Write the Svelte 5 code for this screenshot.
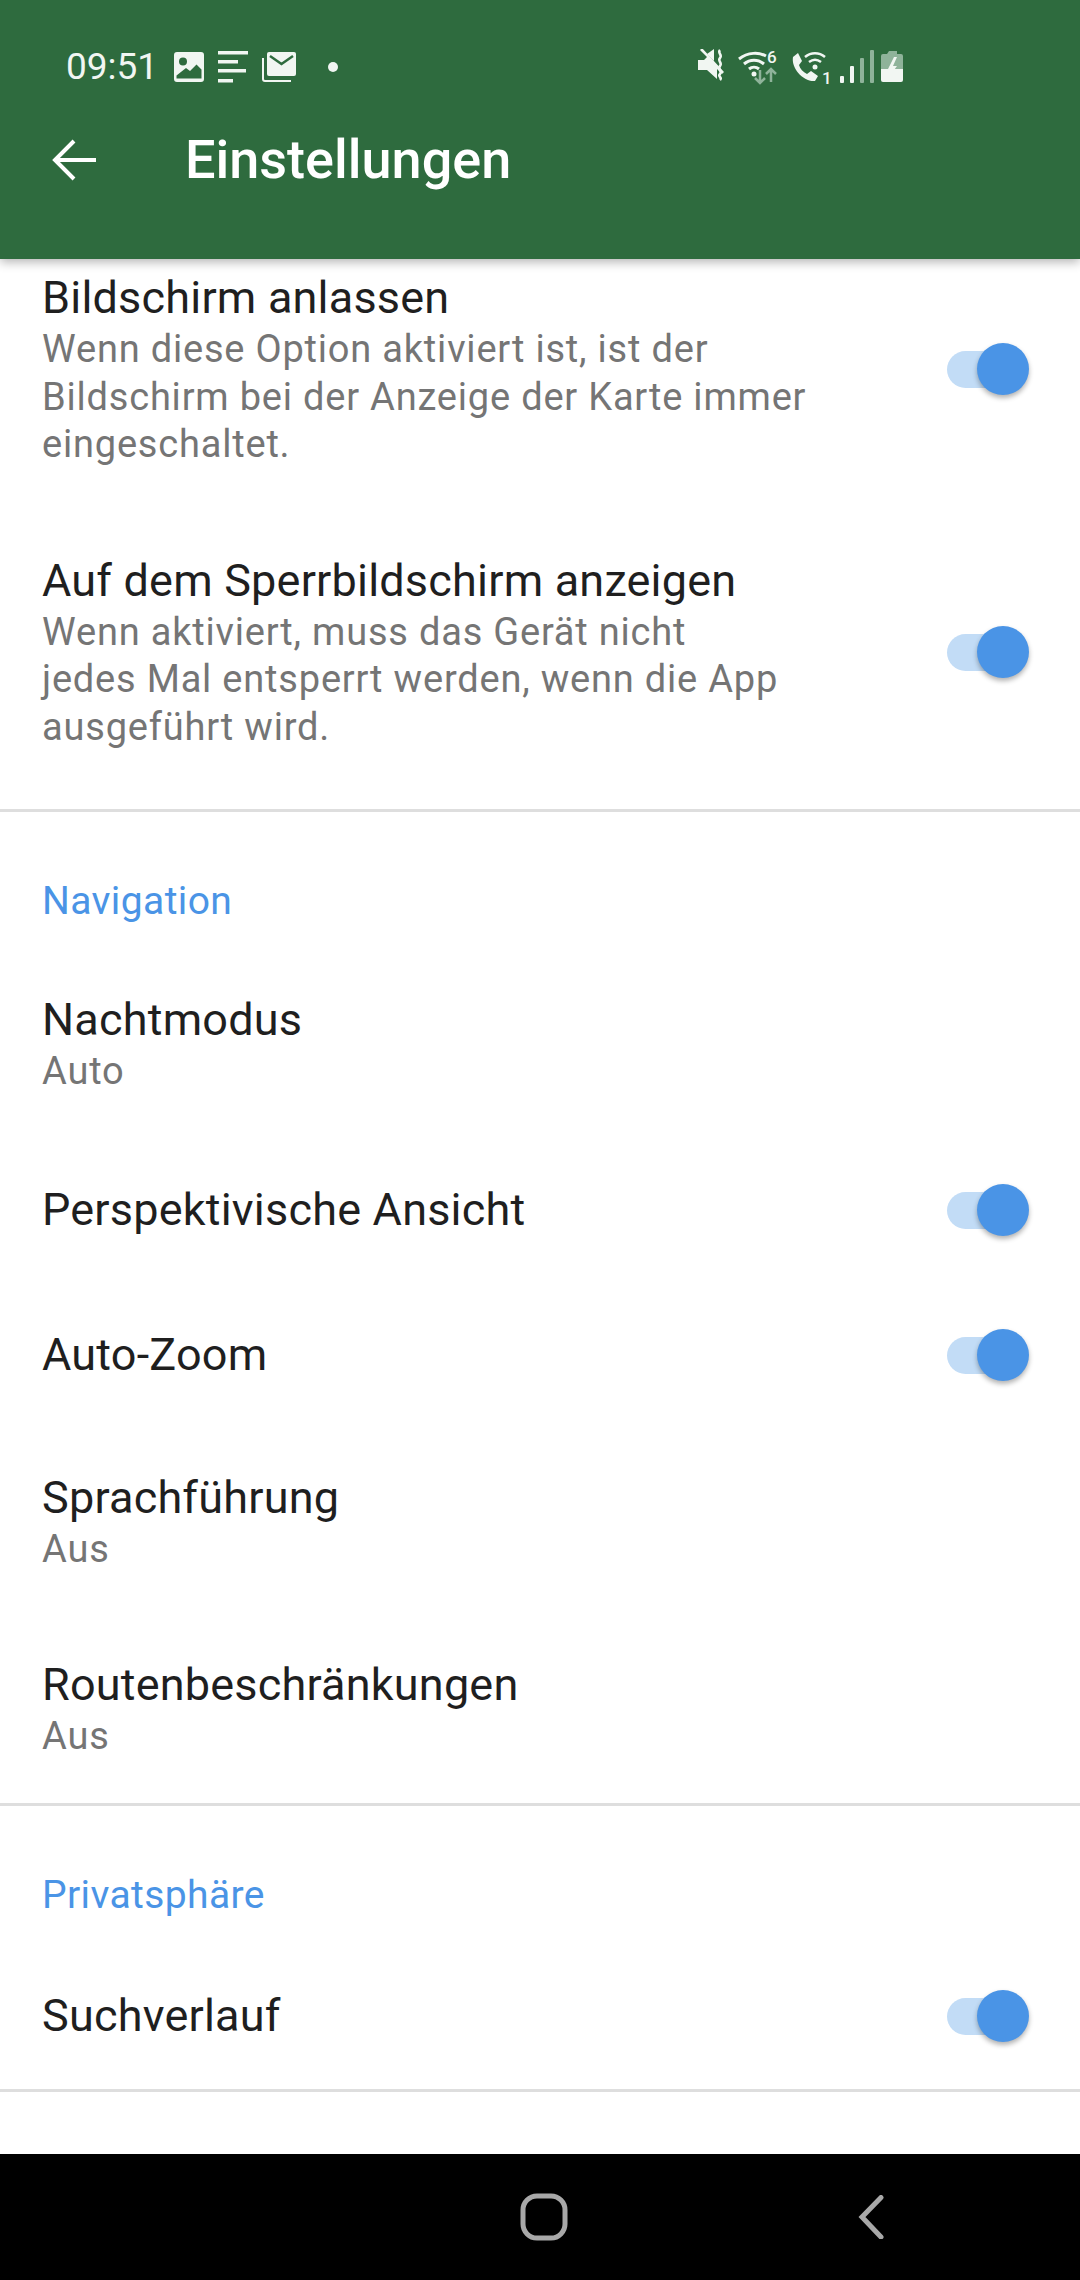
<script>
  const more = [
    { title: 'Bildschirm anlassen', sub: ['Wenn diese Option aktiviert ist, ist der', 'Bildschirm bei der Anzeige der Karte immer', 'eingeschaltet.'], on: true },
    { title: 'Auf dem Sperrbildschirm anzeigen', sub: ['Wenn aktiviert, muss das Gerät nicht', 'jedes Mal entsperrt werden, wenn die App', 'ausgeführt wird.'], on: true }
  ];
  const navigation = [
    { title: 'Nachtmodus', sub: ['Auto'] },
    { title: 'Perspektivische Ansicht', on: true },
    { title: 'Auto-Zoom', on: true },
    { title: 'Sprachführung', sub: ['Aus'] },
    { title: 'Routenbeschränkungen', sub: ['Aus'] }
  ];
  const privacy = [{ title: 'Suchverlauf', on: true }];
</script>

{#snippet row(item)}
  <div class="row">
    <div class="text">
      <div class="title">{item.title}</div>
      {#if item.sub}
        <div class="sub">
          {#each item.sub as line}
            <div>{line}</div>
          {/each}
        </div>
      {/if}
    </div>
    {#if item.on}
      <div class="switch"><span class="track"></span><span class="knob"></span></div>
    {/if}
  </div>
{/snippet}

<div class="screen">
  <header>
    <div class="status">
      <span class="time">09:51</span>
      <div class="left-icons">
        <svg width="30" height="30" viewBox="0 0 30 30">
          <path fill="#f1f6f2" fill-rule="evenodd" d="M3 0h24a3 3 0 0 1 3 3v24a3 3 0 0 1-3 3H3a3 3 0 0 1-3-3V3a3 3 0 0 1 3-3zM2.500 26.500h25v-9l-5-5-6.500 6.500-4-3-9.500 7.500zM9 5.500a4 4 0 1 0 0 8 4 4 0 0 0 0-8z"/>
        </svg>
        <svg width="30" height="32" viewBox="0 0 30 32">
          <g fill="#f1f6f2"><rect y="0" width="30" height="3.500"/><rect y="9" width="20" height="3.500"/><rect y="18" width="28" height="3.500"/><rect y="28" width="15" height="3.500"/></g>
        </svg>
        <svg width="34" height="30" viewBox="0 0 34 30">
          <path fill="none" stroke="#f1f6f2" stroke-width="2" d="M1 6v21a2 2 0 0 0 2 2h26"/>
          <path fill="#f1f6f2" d="M7 0h25a2 2 0 0 1 2 2v20a2 2 0 0 1-2 2H7a2 2 0 0 1-2-2V2a2 2 0 0 1 2-2z"/>
          <path fill="none" stroke="#2e6b3e" stroke-width="2.500" d="M8 4l11.500 8L31 4"/>
        </svg>
        <span class="dot"></span>
      </div>
      <svg class="right-icons" width="212" height="36" viewBox="0 0 212 36">
        <g fill="#f1f6f2">
          <path d="M4 11h6l3-3 -7-7 2-2 22 24-2 2-5-5v10l-10-9H4z"/>
          <path d="M13 5l7-5v12z"/>
        </g>
        <path fill="none" stroke="#f1f6f2" stroke-width="2.500" d="M26 1c-3 3 3 5 0 8s3 5 0 8 3 5 0 8 3 3 0 6"/>
        <g fill="none" stroke="#f1f6f2" stroke-width="3">
          <path d="M45 10c9-7 20-7 27-3"/>
          <path d="M50 15c6-5 14-5 20 0"/>
          <path d="M55 20c3-2.500 7-2.500 10 0"/>
        </g>
        <circle cx="60" cy="25" r="2.500" fill="#f1f6f2"/>
        <text x="73" y="14" class="mini">6</text>
        <g fill="none" stroke="#8fb39a" stroke-width="2.500">
          <path d="M66 21v13M61 29l5 5 5-5"/>
          <path d="M77 33V20M72 25l5-5 5 5"/>
        </g>
        <path fill="#f1f6f2" d="M99 8l5-4 4 8-3 4c1 4 4 7 8 9l4-3 7 5-3 5c-12 1-24-13-22-24z"/>
        <g fill="none" stroke="#f1f6f2" stroke-width="2.500">
          <path d="M111 8c6-5 14-5 20 0"/>
          <path d="M115 13c4-3 8-3 12 0"/>
        </g>
        <circle cx="121" cy="18" r="2.500" fill="#f1f6f2"/>
        <text x="128" y="35" class="mini">1</text>
        <g fill="#f1f6f2">
          <rect x="146" y="27" width="4" height="7" rx="1"/>
          <rect x="156" y="17" width="4" height="17" rx="1"/>
        </g>
        <g fill="#8fb39a">
          <rect x="166" y="9" width="4" height="25" rx="1"/>
          <rect x="176" y="1" width="4" height="33" rx="1"/>
        </g>
        <path fill="#8fb39a" d="M195 2h8v3h4a2 2 0 0 1 2 2v13h-22V7a2 2 0 0 1 2-2h4z"/>
        <path fill="#f1f6f2" d="M187 20h22v11a2 2 0 0 1-2 2h-18a2 2 0 0 1-2-2z"/>
        <path fill="#f1f6f2" d="M200 8l-6 12h4l-3 8 8-11h-4l4-9z"/>
      </svg>
    </div>
    <div class="toolbar">
      <svg class="back" width="44" height="42" viewBox="0 0 44 42">
        <path fill="none" stroke="#fff" stroke-width="4" d="M44 21H4M22 2L3 21l19 19"/>
      </svg>
      <h1>Einstellungen</h1>
    </div>
  </header>

  <main>
    <section class="first">
      {#each more as item}{@render row(item)}{/each}
    </section>
    <section>
      <h2>Navigation</h2>
      {#each navigation as item}{@render row(item)}{/each}
    </section>
    <section>
      <h2>Privatsphäre</h2>
      {#each privacy as item}{@render row(item)}{/each}
    </section>
  </main>

  <nav>
    <svg width="48" height="48" viewBox="0 0 48 48">
      <rect x="3" y="3" width="42" height="42" rx="14" fill="none" stroke="#a8a8a8" stroke-width="5"/>
    </svg>
    <svg width="26" height="44" viewBox="0 0 26 44">
      <path fill="none" stroke="#a8a8a8" stroke-width="5" stroke-linecap="round" stroke-linejoin="miter" d="M23 2.500L4 22l19 20"/>
    </svg>
  </nav>
</div>

<style>
  :global(body) { margin: 0; background: #fff; }
  .screen {
    width: 1080px; height: 2280px; display: flex; flex-direction: column; overflow: hidden;
    font-family: Roboto, "Noto Sans", sans-serif; color: #1f1f1f; background: #fff;
  }
  header {
    height: 259px; flex: none; background: #2e6b3e; color: #fff; position: relative; z-index: 2;
    box-shadow: 0 3px 10px rgba(0,0,0,0.3);
  }
  .status { height: 88px; padding: 47px 0 0 66px; box-sizing: border-box; display: flex; align-items: flex-start; }
  .time { font-size: 37px; line-height: 40px; color: #f1f6f2; width: 108px; }
  .left-icons { display: flex; align-items: center; gap: 14px; height: 40px; }
  .dot { width: 10px; height: 10px; border-radius: 50%; background: #f1f6f2; margin-left: 18px; }
  .right-icons { margin-left: auto; margin-right: 174px; margin-top: 2px; }
  .mini { font: 500 17px Roboto, sans-serif; fill: #f1f6f2; }
  .toolbar { display: flex; align-items: center; height: 171px; padding-left: 52px; padding-bottom: 28px; box-sizing: border-box; }
  .back { flex: none; }
  h1 { margin: 0 0 0 89px; font-size: 54px; font-weight: 500; line-height: 64px; }

  main { flex: 1; overflow: hidden; margin-top: -1px; }
  section { border-bottom: 3px solid #dedede; }
  section.first { padding-bottom: 16px; }
  section h2 { margin: 0; padding: 66px 42px 26px; font-size: 39px; line-height: 46px; font-weight: 400; color: #4a94e6; letter-spacing: 0.4px; }

  .row { display: flex; align-items: center; padding: 42px 51px 42px 42px; min-height: 145px; box-sizing: border-box; }
  .first .row:first-child { padding-top: 12px; }
  .text { flex: 1; min-width: 0; }
  .title { font-size: 45px; line-height: 56px; letter-spacing: 0.2px; }
  .sub { font-size: 38px; line-height: 47.500px; color: #757575; letter-spacing: 0.8px; }
  .switch { position: relative; width: 82px; height: 52px; flex: none; }
  .track { position: absolute; left: 0; right: 8px; top: 8px; height: 37px; border-radius: 19px; background: #c2dcf6; }
  .knob { position: absolute; right: 0; top: 0; width: 52px; height: 52px; border-radius: 50%; background: #4a94e6; box-shadow: 0 3px 5px rgba(0,0,0,0.3); }

  nav { height: 126px; flex: none; background: #000; display: flex; align-items: center; padding-left: 520px; gap: 290px; box-sizing: border-box; }
</style>
